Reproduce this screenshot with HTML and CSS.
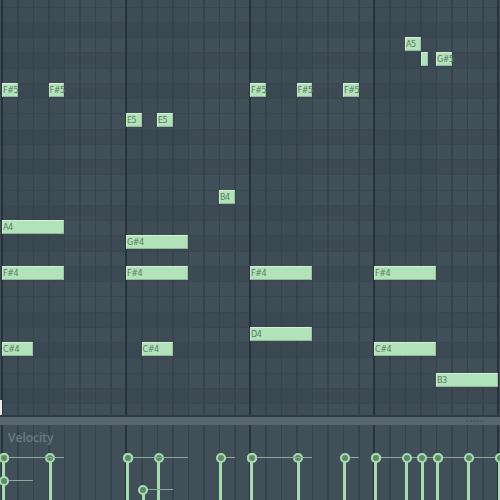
FILE: index.html
```html
<!DOCTYPE html>
<html lang="en">

<head>
    <meta charset="UTF-8" />
    <meta name="viewport" content="width=device-width, initial-scale=1.0" />
    <title>Piano Roll</title>
    <link rel="stylesheet" href="styles.css">
</head>

<body>
    <div class="editor">
        <div class="roll" id="roll">
            <div class="edge-mark"></div>
        </div>
        <div class="splitter">
            <span class="grip">&bull;&bull;&bull;&bull;&bull;</span>
        </div>
        <div class="velocity" id="velocity">
            <div class="vel-title">Velocity</div>
        </div>
    </div>

    <script>
        const STEP = 15.5;
        const ROW = 15.25;
        const LEFT = 2;
        const TOP = 6.7;

        // row index counted down from B5
        const rows = {
            'A5': 2, 'G#5': 3, 'F#5': 5, 'E5': 7, 'B4': 12, 'A4': 14,
            'G#4': 15, 'F#4': 17, 'D4': 21, 'C#4': 22, 'B3': 24
        };

        // [pitch, step, length, velocity y, label shown]
        const notes = [
            ['F#5', 0, 1, 32], ['F#5', 3, 1, 32], ['F#5', 16, 1, 32], ['F#5', 19, 1, 32], ['F#5', 22, 1, 32],
            ['E5', 8, 1, 32], ['E5', 10, 1, 32],
            ['B4', 14, 1, 32],
            ['A4', 0, 4, 32],
            ['G#4', 8, 4, 32],
            ['F#4', 0, 4, 32], ['F#4', 8, 4, 32], ['F#4', 16, 4, 32], ['F#4', 24, 4, 32],
            ['D4', 16, 4, 32],
            ['C#4', 0, 2, 55], ['C#4', 9, 2, 64], ['C#4', 24, 4, 32],
            ['B3', 28, 4, 32],
            ['A5', 26, 1, 32],
            ['G#5', 27, 0.5, 32, false],
            ['G#5', 28, 1, 32]
        ];

        // notes scrolled out of view, only their velocity shows
        const hidden = [[30, 2, 32], [32, 2, 32]];

        const roll = document.getElementById('roll');
        const vel = document.getElementById('velocity');

        function addVelocity(step, len, y) {
            const x = LEFT + step * STEP;
            vel.innerHTML += `
                <div class="vel-tail" style="left:${x + 1}px; top:${y}px; width:${len * STEP - 1}px"></div>
                <div class="vel-stem" style="left:${x}px; top:${y}px"></div>
                <div class="vel-knob" style="left:${x - 3.5}px; top:${y - 4.5}px"></div>
            `;
        }

        notes.map(n => {
            const [pitch, step, len, v, label] = n;
            const x = LEFT + step * STEP;
            const y = TOP + rows[pitch] * ROW;
            roll.innerHTML += `
                <div class="note" style="left:${x}px; top:${y}px; width:${len * STEP}px">${label === false ? '' : pitch}</div>
            `;
        });

        notes.map(n => addVelocity(n[1], n[2], n[3]));
        hidden.map(h => addVelocity(h[0], h[1], h[2]));
    </script>
</body>

</html>
```

FILE: styles.css
```css
body {
    margin: 0;
    background-color: #3f4c56;
    font-family: "DejaVu Sans Condensed", "Liberation Sans", sans-serif;
}

.editor {
    width: 500px;
    height: 500px;
    display: flex;
    flex-direction: column;
    overflow: hidden;
}

.roll {
    position: relative;
    height: 415px;
    flex-shrink: 0;
    background-color: #414f59;
    background-image:
        repeating-linear-gradient(90deg, #27323a 1px, #27323a 3px, transparent 3px, transparent 125px),
        repeating-linear-gradient(90deg, #36434c 2px, #36434c 3px, transparent 3px, transparent 17.5px),
        repeating-linear-gradient(180deg, #3a474f 6.7px, #3a474f 7.7px, transparent 7.7px, transparent 21.95px),
        repeating-linear-gradient(180deg,
            transparent 6.7px, transparent 21.95px,
            rgba(0, 0, 0, 0.06) 21.95px, rgba(0, 0, 0, 0.06) 37.2px,
            transparent 37.2px, transparent 52.45px,
            rgba(0, 0, 0, 0.06) 52.45px, rgba(0, 0, 0, 0.06) 67.7px,
            transparent 67.7px, transparent 82.95px,
            rgba(0, 0, 0, 0.06) 82.95px, rgba(0, 0, 0, 0.06) 98.2px,
            transparent 98.2px, transparent 128.7px,
            rgba(0, 0, 0, 0.06) 128.7px, rgba(0, 0, 0, 0.06) 143.95px,
            transparent 143.95px, transparent 159.2px,
            rgba(0, 0, 0, 0.06) 159.2px, rgba(0, 0, 0, 0.06) 174.45px,
            transparent 174.45px, transparent 189.7px),
        repeating-linear-gradient(90deg, rgba(0, 0, 0, 0.04) 2px, rgba(0, 0, 0, 0.04) 64px, transparent 64px, transparent 126px);
}

.edge-mark {
    position: absolute;
    left: 0;
    bottom: 0;
    width: 2px;
    height: 15px;
    background-color: #e8eef0;
}

.note {
    position: absolute;
    height: 14px;
    box-sizing: border-box;
    background-color: #b2e2ba;
    border-top: 1px solid #d3f1d7;
    border-left: 1px solid #c8ecce;
    border-bottom: 1px solid #8fb897;
    border-right: 1px solid #9cc7a3;
    color: #5a7a61;
    font-size: 9px;
    letter-spacing: -0.5px;
    line-height: 12px;
    padding-left: 0;
    white-space: nowrap;
}

.splitter {
    height: 10px;
    flex-shrink: 0;
    box-sizing: border-box;
    border-top: 2px solid #2f3a42;
    background-color: #58656e;
    display: flex;
    justify-content: flex-end;
    align-items: center;
    padding-right: 16px;
}

.grip {
    font-size: 6px;
    letter-spacing: 0.5px;
    color: #444f57;
    line-height: 6px;
}

.velocity {
    position: relative;
    flex: 1;
    background-color: #414f59;
    background-image:
        repeating-linear-gradient(90deg, #27323a 1px, #27323a 3px, transparent 3px, transparent 125px),
        repeating-linear-gradient(90deg, #36434c 2px, #36434c 3px, transparent 3px, transparent 17.5px);
}

.vel-title {
    padding: 4px 0 0 8px;
    font-family: "Open Sans", "Liberation Sans", sans-serif;
    font-size: 12px;
    font-weight: 600;
    color: #6c7a84;
}

.vel-tail {
    position: absolute;
    height: 1px;
    background-color: #8fa9a0;
}

.vel-stem {
    position: absolute;
    width: 3px;
    bottom: 0;
    background-color: #a7dcb0;
}

.vel-knob {
    position: absolute;
    width: 10px;
    height: 10px;
    box-sizing: border-box;
    border-radius: 50%;
    border: 2px solid #a7dcb0;
    background-color: #5c8b64;
}
```
